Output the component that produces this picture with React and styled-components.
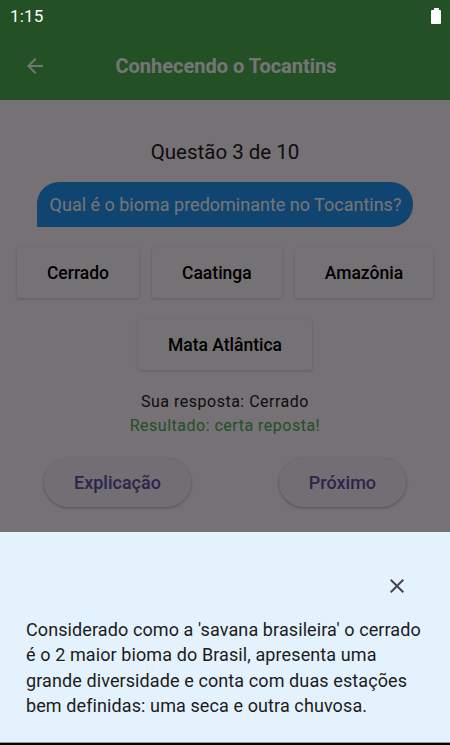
import React from "react";
import styled, { createGlobalStyle } from "styled-components";

const GlobalStyle = createGlobalStyle`
  * { box-sizing: border-box; }
  body {
    margin: 0;
    font-family: Roboto, "Noto Sans", sans-serif;
  }
`;

const options = ["Cerrado", "Caatinga", "Amazônia", "Mata Atlântica"];

const App = () => {
  return (
    <Page>
      <GlobalStyle />
      <StatusBar>
        <Time>1:15</Time>
        <Battery>
          <BatteryCap />
          <BatteryBody />
        </Battery>
      </StatusBar>
      <Screen>
        <AppBar>
          <BackBtn>
            <svg width="24" height="24" viewBox="0 0 24 24">
              <path
                d="M20 11H7.83l5.59-5.59L12 4l-8 8 8 8 1.41-1.41L7.83 13H20v-2z"
                fill="#fff"
              />
            </svg>
          </BackBtn>
          <Title>Conhecendo o Tocantins</Title>
        </AppBar>
        <Body>
          <Counter>Questão 3 de 10</Counter>
          <Bubble>Qual é o bioma predominante no Tocantins?</Bubble>
          <Options>
            {options.map((o) => (
              <OptionCard key={o}>{o}</OptionCard>
            ))}
          </Options>
          <Answer>Sua resposta: Cerrado</Answer>
          <Result>Resultado: certa reposta!</Result>
          <Actions>
            <PillBtn>Explicação</PillBtn>
            <PillBtn>Próximo</PillBtn>
          </Actions>
        </Body>
        <Scrim />
        <Sheet>
          <CloseRow>
            <CloseBtn>
              <svg width="24" height="24" viewBox="0 0 24 24">
                <path
                  d="M19 6.41 17.59 5 12 10.59 6.41 5 5 6.41 10.59 12 5 17.59 6.41 19 12 13.41 17.59 19 19 17.59 13.41 12z"
                  fill="#49454f"
                />
              </svg>
            </CloseBtn>
          </CloseRow>
          <SheetText>
            Considerado como a 'savana brasileira' o cerrado é o 2 maior bioma do
            Brasil, apresenta uma grande diversidade e conta com duas estações bem
            definidas: uma seca e outra chuvosa.
          </SheetText>
        </Sheet>
      </Screen>
      <NavLine />
    </Page>
  );
};

export default App;

const Page = styled.div`
  width: 450px;
  height: 745px;
  display: flex;
  flex-direction: column;
  overflow: hidden;
  background: #fef7ff;
`;

const StatusBar = styled.div`
  height: 32px;
  flex-shrink: 0;
  background: #235025;
  display: flex;
  align-items: center;
  justify-content: space-between;
  padding: 0 9px 0 10px;
`;

const Time = styled.span`
  color: #fff;
  font-size: 17px;
  letter-spacing: 0.2px;
`;

const Battery = styled.div`
  display: flex;
  flex-direction: column;
  align-items: center;
`;

const BatteryCap = styled.div`
  width: 5px;
  height: 2px;
  background: #fff;
`;

const BatteryBody = styled.div`
  width: 10px;
  height: 14px;
  background: #fff;
  border-radius: 1px;
`;

const Screen = styled.div`
  position: relative;
  flex: 1;
  display: flex;
  flex-direction: column;
`;

const AppBar = styled.div`
  height: 68px;
  background: #4caf50;
  display: flex;
  align-items: center;
  padding: 0 16px 0 23px;
`;

const BackBtn = styled.div`
  width: 24px;
  height: 24px;
  display: flex;
`;

const Title = styled.div`
  flex: 1;
  text-align: center;
  color: #fff;
  font-size: 20px;
  font-weight: 700;
  margin-right: 29px;
`;

const Body = styled.div`
  display: flex;
  flex-direction: column;
  align-items: center;
  padding-top: 40px;
`;

const Counter = styled.div`
  font-size: 20.5px;
  color: #1d1b20;
  line-height: 24px;
`;

const Bubble = styled.div`
  margin-top: 18px;
  background: #2196f3;
  color: #fff;
  font-size: 18px;
  height: 45px;
  display: flex;
  align-items: center;
  padding: 0 12px 0 13px;
  border-radius: 22px 22px 22px 0;
`;

const Options = styled.div`
  margin-top: 21px;
  display: flex;
  flex-wrap: wrap;
  justify-content: center;
  column-gap: 13px;
  row-gap: 22px;
  padding: 0 15px;
`;

const OptionCard = styled.div`
  height: 50px;
  padding: 0 30px;
  display: flex;
  align-items: center;
  font-size: 17.5px;
  font-weight: 500;
  color: #000;
  background: #fff9ff;
  border-radius: 2px;
  box-shadow: 0 1px 3px rgba(0, 0, 0, 0.18);
`;

const Answer = styled.div`
  margin-top: 20px;
  font-size: 16px;
  letter-spacing: 0.5px;
  color: #1d1b20;
  line-height: 24px;
`;

const Result = styled.div`
  font-size: 16px;
  letter-spacing: 0.5px;
  color: #4caf50;
  line-height: 24px;
`;

const Actions = styled.div`
  align-self: stretch;
  margin-top: 20px;
  display: flex;
  justify-content: space-around;
`;

const PillBtn = styled.div`
  height: 49px;
  padding: 0 30px;
  display: flex;
  align-items: center;
  border-radius: 25px;
  background: #f7f2fa;
  color: #6750a4;
  font-size: 18px;
  font-weight: 500;
  box-shadow: 0 1px 3px rgba(0, 0, 0, 0.3);
`;

const Scrim = styled.div`
  position: absolute;
  inset: 0;
  background: rgba(0, 0, 0, 0.54);
`;

const Sheet = styled.div`
  position: absolute;
  left: 0;
  right: 0;
  bottom: 0;
  height: 210px;
  background: #e3f2fd;
  padding: 42px 26px 0;
`;

const CloseRow = styled.div`
  display: flex;
  justify-content: flex-end;
  padding-right: 15px;
`;

const CloseBtn = styled.div`
  width: 24px;
  height: 24px;
  display: flex;
`;

const SheetText = styled.p`
  margin: 19px 0 0;
  font-size: 18px;
  letter-spacing: 0.1px;
  line-height: 25.3px;
  color: #1d1b20;
`;

const NavLine = styled.div`
  height: 3px;
  flex-shrink: 0;
  background: #000;
  border-top: 1px solid #999;
`;
